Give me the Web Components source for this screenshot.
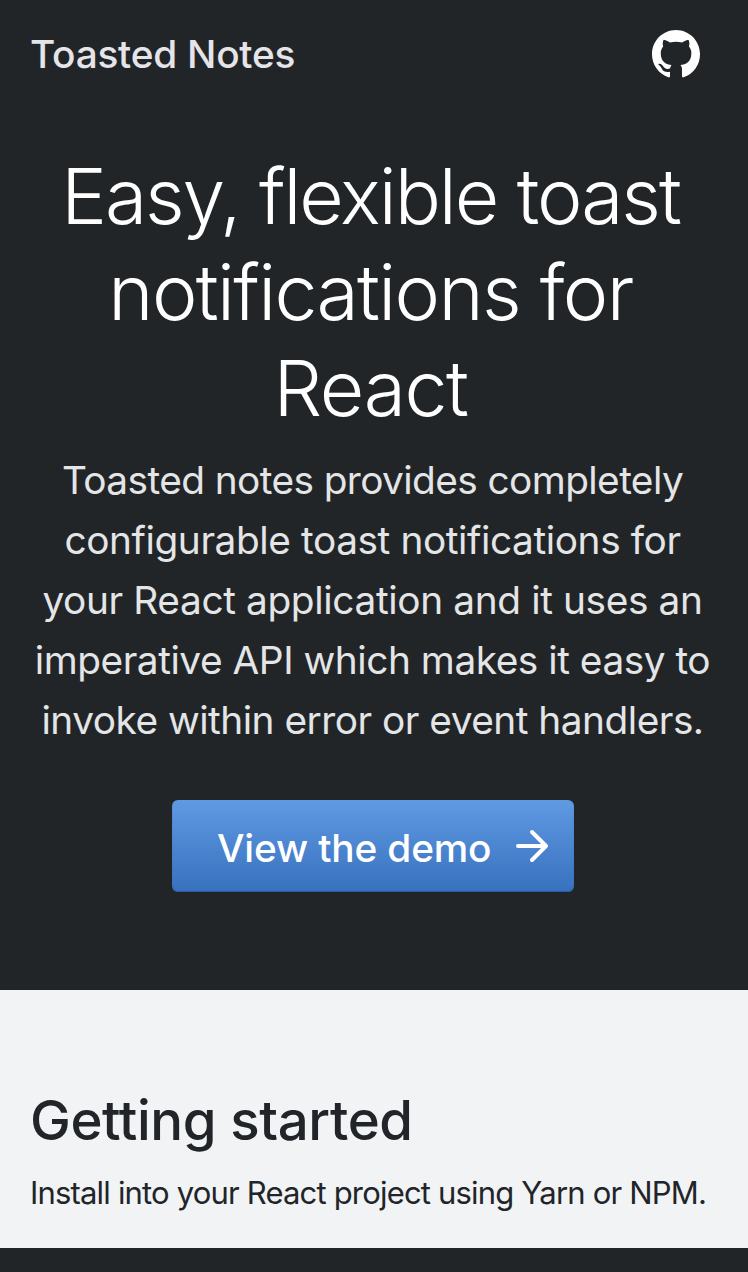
<!DOCTYPE html>
<html lang="en">
<head>
<meta charset="utf-8">
<title>Toasted Notes</title>
<style>
body { margin: 0; background: #222528; font-family: Inter, "Liberation Sans", sans-serif; color: #212529; }
</style>
</head>
<body>
<toasted-page></toasted-page>
<script>
const define = (name, html) => customElements.define(name, class extends HTMLElement {
  constructor() {
    super();
    const t = document.createElement('template');
    t.innerHTML = html;
    this.attachShadow({ mode: 'open' }).append(t.content.cloneNode(true));
  }
});

define('github-mark', `
<style>:host{display:block;width:48px;height:48px;color:#fff}svg{display:block}</style>
<svg width="48" height="48" viewBox="0 0 16 15.8" preserveAspectRatio="none" fill="currentColor" aria-label="GitHub"><path d="M8 0C3.58 0 0 3.58 0 8c0 3.54 2.29 6.53 5.47 7.59.4.07.55-.17.55-.38 0-.19-.01-.82-.01-1.49-2.01.37-2.53-.49-2.69-.94-.09-.23-.48-.94-.82-1.13-.28-.15-.68-.52-.01-.53.63-.01 1.08.58 1.23.82.72 1.21 1.87.87 2.33.66.07-.52.28-.87.51-1.07-1.78-.2-3.64-.89-3.64-3.95 0-.87.31-1.59.82-2.15-.08-.2-.36-1.02.08-2.12 0 0 .67-.21 2.2.82.64-.18 1.32-.27 2-.27s1.36.09 2 .27c1.53-1.04 2.2-.82 2.2-.82.44 1.1.16 1.92.08 2.12.51.56.82 1.27.82 2.15 0 3.07-1.87 3.75-3.65 3.95.29.25.54.73.54 1.48 0 1.07-.01 1.93-.01 2.2 0 .21.15.46.55.38A8.01 8.01 0 0 0 16 8c0-4.42-3.58-8-8-8z"/></svg>`);

define('arrow-icon', `
<style>:host{display:block;width:48px;height:48px}svg{display:block}</style>
<svg width="48" height="48" viewBox="0 0 24 24" fill="none" stroke="currentColor" stroke-width="2" stroke-linecap="round" stroke-linejoin="round"><path d="M5 12h14M12 5l7 7-7 7"/></svg>`);

define('site-header', `
<style>
:host{display:flex;align-items:center;justify-content:space-between;height:108px;box-sizing:border-box;padding:0 48px 0 30px}
span{font-size:38.8px;font-weight:500;line-height:48px;letter-spacing:-.239px;color:#e4e4e9;white-space:nowrap}
</style>
<span><slot></slot></span><github-mark></github-mark>`);

define('demo-button', `
<style>
:host{display:block}
a{display:flex;align-items:center;justify-content:space-between;box-sizing:border-box;width:402px;height:92px;padding:0 18px 0 45px;border-radius:6px;color:#fff;text-decoration:none;background:linear-gradient(#5f9ae3,#3871be);box-shadow:inset 0 -1px 1px #2a5f9f}
span{font-size:38.8px;font-weight:500;letter-spacing:-.15px;line-height:48px;padding-top:4px;white-space:nowrap}
</style>
<a href="#demo"><span><slot></slot></span><arrow-icon></arrow-icon></a>`);

define('hero-banner', `
<style>
:host{display:flex;flex-direction:column;align-items:center;height:882px;box-sizing:border-box;padding:41px 2px 0 0;text-align:center;white-space:nowrap}
h1{margin:0;padding-right:5px;font-size:76.8px;font-weight:320;line-height:96px;color:#fff}
p{margin:13px 0 50px;padding-right:1px;font-size:38.8px;line-height:60px;color:#e4e5e7}
h1 span,p span{display:block;letter-spacing:var(--track)}
</style>
<h1><span style="--track:-2.05px">Easy, flexible toast</span><span style="--track:-1.65px">notifications for</span><span style="--track:-1.35px">React</span></h1>
<p><span style="--track:-.591px">Toasted notes provides completely</span><span style="--track:-.407px">configurable toast notifications for</span><span style="--track:-.37px">your React application and it uses an</span><span style="--track:-.465px">imperative API which makes it easy to</span><span style="--track:-.5px">invoke within error or event handlers.</span></p>
<demo-button>View the demo</demo-button>`);

define('getting-started', `
<style>
:host{display:block;box-sizing:border-box;height:258px;padding:96px 29px 0 30px;background:#f1f3f5;color:#212529;white-space:nowrap}
h2{margin:0;font-size:54.6px;font-weight:500;line-height:68px;letter-spacing:-.4px}
p{margin:15px 0 0;font-size:31px;line-height:48px;letter-spacing:-.82px}
</style>
<h2>Getting started</h2>
<p><slot></slot></p>`);

define('toasted-page', `
<style>:host{display:block;height:1272px;overflow:hidden;background:#222528}</style>
<site-header>Toasted Notes</site-header>
<hero-banner></hero-banner>
<getting-started>Install into your React project using Yarn or NPM.</getting-started>`);
</script>
</body>
</html>
